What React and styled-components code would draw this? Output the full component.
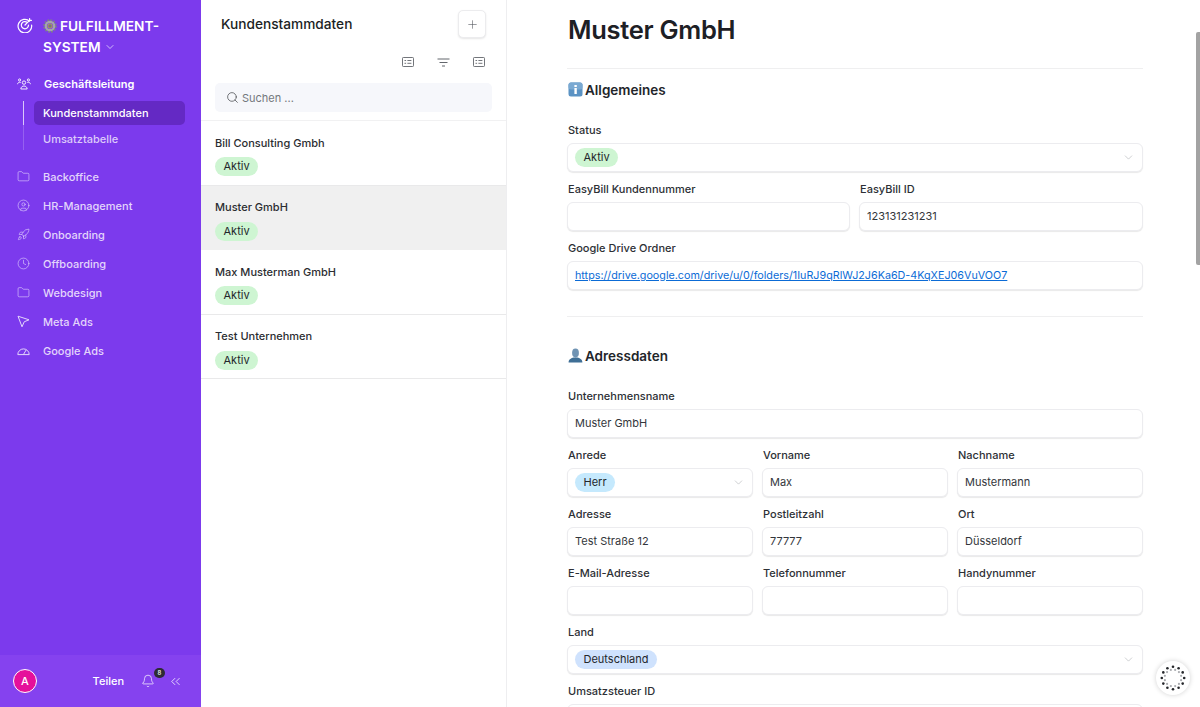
import React from "react";
import styled, { createGlobalStyle } from "styled-components";
import {
  ChevronDown,
  ChevronsLeft,
  Bell,
  Plus,
  Search,
  Folder,
  CircleUser,
  Rocket,
  Clock,
} from "lucide-react";

const GlobalStyle = createGlobalStyle`
  html, body, #root {
    margin: 0;
    height: 100%;
  }
  body {
    font-family: Inter, "Liberation Sans", sans-serif;
    color: #1f2328;
    background: #fff;
    overflow: hidden;
  }
  * { box-sizing: border-box; }
`;

const Page = styled.div`
  display: flex;
  height: 707px;
  overflow: hidden;
`;

/* sidebar */

const Sidebar = styled.aside`
  width: 201px;
  flex: none;
  display: flex;
  flex-direction: column;
  background: #7c3aed;
  color: #fff;
`;

const Brand = styled.div`
  display: flex;
  gap: 10px;
  padding: 16px 0 0 17px;
  height: 70px;
  svg.logo { margin-top: 1px; flex: none; }
`;

const BrandName = styled.div`
  font-size: 13.7px;
  font-weight: 600;
  line-height: 21px;
  width: 130px;
  svg { margin-left: 3px; vertical-align: -1px; }
  svg.gear { margin: 0 3px 0 0; vertical-align: -2px; }
`;

const Nav = styled.nav`
  flex: 1;
  display: flex;
  flex-direction: column;
`;

const NavItem = styled.div`
  display: flex;
  align-items: center;
  gap: 13px;
  height: 29px;
  padding: 0 0 2px 17px;
  font-size: 11px;
  font-weight: ${(p) => (p.$strong ? 600 : 500)};
  color: ${(p) => (p.$strong ? "#fff" : "#e3d5fb")};
  svg { flex: none; }
`;

const SubList = styled.div`
  margin: 2px 0 13px 23px;
  border-left: 1px solid rgba(255, 255, 255, 0.2);
  padding-left: 10px;
  width: 162px;
  height: 49px;
  position: relative;
`;

const SubItem = styled.div`
  height: 24px;
  margin-bottom: 2px;
  display: flex;
  align-items: center;
  padding-left: 9px;
  border-radius: 5px;
  font-size: 11px;
  font-weight: 500;
  color: ${(p) => (p.$active ? "#fff" : "#dccbfa")};
  background: ${(p) => (p.$active ? "#6429c4" : "transparent")};
  ${(p) =>
    p.$active &&
    `&::before {
      content: "";
      position: absolute;
      left: -1px;
      top: 0;
      width: 1px;
      height: 24px;
      background: rgba(255, 255, 255, 0.65);
    }`}
`;

const SidebarFooter = styled.div`
  height: 52px;
  flex: none;
  display: flex;
  align-items: center;
  padding: 0 18px 0 13px;
  background: #8542ef;
  font-size: 11px;
  font-weight: 500;
`;

const Avatar = styled.div`
  width: 24px;
  height: 24px;
  border-radius: 50%;
  border: 1px solid #fff;
  background: #e5109b;
  display: flex;
  align-items: center;
  justify-content: center;
  font-size: 11px;
  font-weight: 500;
`;

const Share = styled.span`
  margin-left: auto;
  margin-right: 17px;
`;

const BellWrap = styled.div`
  position: relative;
  display: flex;
  margin-right: 13px;
`;

const BellBadge = styled.span`
  position: absolute;
  top: -6px;
  right: -10px;
  width: 11px;
  height: 10px;
  border-radius: 5px;
  background: #2c2c34;
  font-size: 6px;
  line-height: 10px;
  text-align: center;
`;

/* list pane */

const ListPane = styled.section`
  width: 306px;
  flex: none;
  border-right: 1px solid #eeeef0;
  background: #fff;
`;

const ListHead = styled.div`
  display: flex;
  align-items: center;
  justify-content: space-between;
  padding: 10px 20px 0 20px;
  height: 38px;
`;

const ListTitle = styled.h2`
  margin: 0;
  font-size: 13.7px;
  font-weight: 500;
  color: #1c1f24;
`;

const AddButton = styled.button`
  width: 28px;
  height: 28px;
  padding: 0;
  display: flex;
  align-items: center;
  justify-content: center;
  background: #fff;
  border: 1px solid #ececee;
  border-radius: 5px;
  box-shadow: 0 1px 2px rgba(0, 0, 0, 0.1);
  color: #55585e;
`;

const ToolRow = styled.div`
  display: flex;
  justify-content: flex-end;
  gap: 23px;
  height: 24px;
  padding: 0 21px 0 0;
  align-items: center;
  margin-top: 12px;
  color: #63666c;
`;

const SearchBox = styled.div`
  display: flex;
  align-items: center;
  gap: 3px;
  margin: 9px 14px 0 14px;
  height: 29px;
  padding-left: 11px;
  border-radius: 5px;
  background: #f6f7fb;
  font-size: 11px;
  color: #74777d;
`;

const ListRows = styled.div`
  margin-top: 8px;
  border-top: 1px solid #f1f1f2;
`;

const ListRow = styled.div`
  height: 64.5px;
  padding: 14.5px 14px 0;
  border-bottom: 1px solid ${(p) => (p.$selected ? "#f0f0f0" : "#e9e9ea")};
  background: ${(p) => (p.$selected ? "#f0f0f0" : "#fff")};
`;

const RowName = styled.div`
  font-size: 11px;
  font-weight: 500;
  line-height: 14px;
  color: #2b2d31;
  margin-bottom: 4.5px;
`;

const Pill = styled.span`
  display: inline-flex;
  align-items: center;
  height: 19px;
  padding: 0 8.5px;
  border-radius: 10px;
  background: ${(p) => p.$bg || "#cef5d2"};
  font-size: 11px;
  line-height: 19px;
  color: #23262b;
`;

/* detail */

const Main = styled.main`
  flex: 1;
  min-width: 0;
  height: 707px;
  overflow: hidden;
  padding: 0 57px 0 60px;
`;

const Title = styled.h1`
  margin: 0;
  padding: 14px 0 0 1px;
  height: 69px;
  font-size: 25.5px;
  line-height: 32px;
  font-weight: 600;
  letter-spacing: -0.3px;
  color: #1d2025;
  border-bottom: 1px solid #efeff0;
`;

const SectionTitle = styled.h3`
  display: flex;
  align-items: center;
  gap: 2px;
  margin: 0;
  padding-left: 1px;
  height: 21px;
  font-size: 13.5px;
  font-weight: 600;
  color: #22252a;
`;

const FormSection = styled.section`
  padding-top: ${(p) => p.$top}px;
`;

const Fields = styled.div`
  display: flex;
  flex-direction: column;
  gap: 11px;
  margin-top: ${(p) => p.$top}px;
`;

const FieldRow = styled.div`
  display: grid;
  grid-template-columns: ${(p) => p.$cols};
  gap: 9px;
`;

const Field = styled.div`
  min-width: 0;
`;

const Label = styled.label`
  display: block;
  height: 19px;
  padding-left: 1px;
  font-size: 11px;
  line-height: 12px;
  font-weight: 500;
  color: #2d3035;
`;

const boxStyles = `
  width: 100%;
  height: 29px;
  background: #fff;
  border: 1px solid #ececef;
  border-radius: 6px;
  box-shadow: 0 1px 1px rgba(0, 0, 0, 0.09);
  font-family: Inter, "Liberation Sans", sans-serif;
  font-size: 11px;
  color: #33363b;
`;

const TextBox = styled.input`
  ${boxStyles}
  display: block;
  padding: 0 7px 1px;
  outline: none;
`;

const LinkBox = styled.div`
  ${boxStyles}
  display: flex;
  align-items: center;
  padding: 0 7px;
  a { color: #0b6bd6; text-decoration: underline; font-size: 10.75px; }
`;

const SelectBox = styled.div`
  ${boxStyles}
  display: flex;
  align-items: center;
  justify-content: space-between;
  padding: 0 7px;
  svg { color: #a5a7ab; }
`;

const Divider = styled.hr`
  margin: 26px 0 0;
  border: none;
  border-top: 1px solid #efeff0;
`;

const Scrollbar = styled.div`
  position: absolute;
  right: 0;
  top: 32px;
  width: 4px;
  height: 233px;
  border-radius: 2px 0 0 2px;
  background: #a3a3a3;
`;

const Spinner = styled.div`
  position: absolute;
  right: 10px;
  bottom: 12px;
  width: 34px;
  height: 34px;
  border-radius: 50%;
  background: #fff;
  box-shadow: 0 0 5px rgba(0, 0, 0, 0.18);
  display: flex;
  align-items: center;
  justify-content: center;
`;

const TargetLogo = () => (
  <svg className="logo" width="16" height="16" viewBox="0 0 16 16" fill="none" stroke="currentColor" strokeWidth="1.2" strokeLinecap="round">
    <path d="M12.6 4.2A6.8 6.8 0 1 0 14.6 8" />
    <path d="M10.2 5.4A3.6 3.6 0 1 0 11.5 8" />
    <path d="M8 8l4.6-4.6M12.6 3.4V1.6M12.6 3.4h1.8" />
  </svg>
);

const TeamIcon = () => (
  <svg width="14" height="12" viewBox="0 0 14 12" fill="none" stroke="currentColor" strokeWidth="0.9">
    <circle cx="7" cy="4.6" r="1.7" />
    <path d="M3.8 11c.3-2 1.5-3 3.2-3s2.9 1 3.2 3z" />
    <circle cx="2.6" cy="2" r="1.1" />
    <circle cx="11.4" cy="2" r="1.1" />
    <path d="M.5 6.2c.2-1.2 1-1.9 2.1-1.9.5 0 .9.1 1.2.4M13.5 6.2c-.2-1.2-1-1.9-2.1-1.9-.5 0-.9.1-1.2.4" />
  </svg>
);

const PointerIcon = () => (
  <svg width="13" height="13" viewBox="0 0 13 13" fill="none" stroke="currentColor" strokeWidth="1" strokeLinejoin="round">
    <path d="M1 1.2l11 3.6-4.8 2-2.2 5z" />
  </svg>
);

const DomeIcon = () => (
  <svg width="13" height="13" viewBox="0 0 13 13" fill="none" stroke="currentColor" strokeWidth="1" strokeLinejoin="round">
    <path d="M.8 10.6a5.7 5.7 0 1 1 11.4 0z" />
    <path d="M6.5 10.4l2.6-4.4" />
  </svg>
);

const ListIcon = () => (
  <svg width="12" height="10" viewBox="0 0 12 10" fill="none" stroke="currentColor" strokeWidth="0.9">
    <rect x="0.5" y="0.5" width="11" height="9" rx="0.8" />
    <path d="M2.5 3.5h1.6M5.4 3.5h4M2.5 6.3h1.6M5.4 6.3h4" />
  </svg>
);

const FilterIcon = () => (
  <svg width="13" height="9" viewBox="0 0 13 9" fill="none" stroke="currentColor" strokeWidth="1">
    <path d="M0.5 1h12M2.5 4.5h8M5 8h3" />
  </svg>
);

const GearEmoji = () => (
  <svg className="gear" width="14" height="14" viewBox="0 0 14 14">
    <circle cx="7" cy="7" r="5.8" fill="none" stroke="#7d8187" strokeWidth="2" strokeDasharray="1.8 1.2" />
    <circle cx="7" cy="7" r="4.2" fill="none" stroke="#a4a7ab" strokeWidth="2.2" />
    <circle cx="7" cy="7" r="2.2" fill="#74777c" stroke="#c2ae4a" strokeWidth="0.8" />
  </svg>
);

const InfoEmoji = () => (
  <svg width="15" height="15" viewBox="0 0 15 15">
    <rect x="0.5" y="0.5" width="14" height="14" rx="2.5" fill="#5b93c4" />
    <rect x="0.5" y="0.5" width="14" height="7" rx="2.5" fill="#7aa9d2" />
    <rect x="6.4" y="6" width="2.4" height="6" fill="#fff" />
    <rect x="6.4" y="3" width="2.4" height="2" fill="#fff" />
  </svg>
);

const BustEmoji = () => (
  <svg width="15" height="15" viewBox="0 0 15 15">
    <ellipse cx="7.5" cy="5" rx="3.4" ry="4.4" fill="#6f93b3" />
    <path d="M0.6 14.5c0-3.4 3-4.4 4.8-5h4.2c1.8.6 4.8 1.6 4.8 5z" fill="#3f6f96" />
  </svg>
);

const navItems = [
  { label: "Backoffice", icon: <Folder size={13} strokeWidth={1.1} /> },
  { label: "HR-Management", icon: <CircleUser size={13} strokeWidth={1.1} /> },
  { label: "Onboarding", icon: <Rocket size={13} strokeWidth={1.1} /> },
  { label: "Offboarding", icon: <Clock size={13} strokeWidth={1.1} /> },
  { label: "Webdesign", icon: <Folder size={13} strokeWidth={1.1} /> },
  { label: "Meta Ads", icon: <PointerIcon /> },
  { label: "Google Ads", icon: <DomeIcon /> },
];

const customers = ["Bill Consulting Gmbh", "Muster GmbH", "Max Musterman GmbH", "Test Unternehmen"];

const spinnerDots = Array.from({ length: 12 }, (_, i) => (i / 12) * Math.PI * 2);

const Text = ({ label, value }) => (
  <Field>
    <Label>{label}</Label>
    <TextBox readOnly defaultValue={value} />
  </Field>
);

const Select = ({ label, value, bg }) => (
  <Field>
    <Label>{label}</Label>
    <SelectBox>
      <Pill $bg={bg}>{value}</Pill>
      <ChevronDown size={13} strokeWidth={1} />
    </SelectBox>
  </Field>
);

export default function App() {
  return (
    <Page>
      <GlobalStyle />
      <Sidebar>
        <Brand>
          <TargetLogo />
          <BrandName>
            <GearEmoji />
            FULFILLMENT-SYSTEM
            <ChevronDown size={12} strokeWidth={1.3} />
          </BrandName>
        </Brand>
        <Nav>
          <NavItem $strong>
            <TeamIcon />
            Geschäftsleitung
          </NavItem>
          <SubList>
            <SubItem $active>Kundenstammdaten</SubItem>
            <SubItem>Umsatztabelle</SubItem>
          </SubList>
          {navItems.map(({ label, icon }) => (
            <NavItem key={label}>
              {icon}
              {label}
            </NavItem>
          ))}
        </Nav>
        <SidebarFooter>
          <Avatar>A</Avatar>
          <Share>Teilen</Share>
          <BellWrap>
            <Bell size={14} strokeWidth={1.2} />
            <BellBadge>8</BellBadge>
          </BellWrap>
          <ChevronsLeft size={15} strokeWidth={1.2} />
        </SidebarFooter>
      </Sidebar>

      <ListPane>
        <ListHead>
          <ListTitle>Kundenstammdaten</ListTitle>
          <AddButton>
            <Plus size={13} strokeWidth={1.1} />
          </AddButton>
        </ListHead>
        <ToolRow>
          <ListIcon />
          <FilterIcon />
          <ListIcon />
        </ToolRow>
        <SearchBox>
          <Search size={13} strokeWidth={1.3} color="#3d4045" />
          Suchen ...
        </SearchBox>
        <ListRows>
          {customers.map((name) => (
            <ListRow key={name} $selected={name === "Muster GmbH"}>
              <RowName>{name}</RowName>
              <Pill>Aktiv</Pill>
            </ListRow>
          ))}
        </ListRows>
      </ListPane>

      <Main>
        <Title>Muster GmbH</Title>
        <FormSection $top={10}>
          <SectionTitle>
            <InfoEmoji />
            Allgemeines
          </SectionTitle>
          <Fields $top={24}>
            <Select label="Status" value="Aktiv" />
            <FieldRow $cols="283px 1fr">
              <Text label="EasyBill Kundennummer" />
              <Text label="EasyBill ID" value="123131231231" />
            </FieldRow>
            <Field>
              <Label>Google Drive Ordner</Label>
              <LinkBox>
                <a href="#drive">https://drive.google.com/drive/u/0/folders/1IuRJ9qRlWJ2J6Ka6D-4KqXEJ06VuVOO7</a>
              </LinkBox>
            </Field>
          </Fields>
          <Divider />
        </FormSection>
        <FormSection $top={28}>
          <SectionTitle>
            <BustEmoji />
            Adressdaten
          </SectionTitle>
          <Fields $top={24}>
            <Text label="Unternehmensname" value="Muster GmbH" />
            <FieldRow $cols="repeat(3, 1fr)">
              <Select label="Anrede" value="Herr" bg="#c5e9fd" />
              <Text label="Vorname" value="Max" />
              <Text label="Nachname" value="Mustermann" />
            </FieldRow>
            <FieldRow $cols="repeat(3, 1fr)">
              <Text label="Adresse" value="Test Straße 12" />
              <Text label="Postleitzahl" value="77777" />
              <Text label="Ort" value="Düsseldorf" />
            </FieldRow>
            <FieldRow $cols="repeat(3, 1fr)">
              <Text label="E-Mail-Adresse" />
              <Text label="Telefonnummer" />
              <Text label="Handynummer" />
            </FieldRow>
            <Select label="Land" value="Deutschland" bg="#cfe2fd" />
            <Text label="Umsatzsteuer ID" />
          </Fields>
        </FormSection>
      </Main>

      <Scrollbar />
      <Spinner>
        <svg width="26" height="26" viewBox="0 0 26 26">
          {spinnerDots.map((a) => (
            <React.Fragment key={a}>
              <circle cx={13 + Math.cos(a) * 11.2} cy={13 + Math.sin(a) * 11.2} r="1.3" fill="#25272b" />
              <circle cx={13 + Math.cos(a + 0.26) * 8.4} cy={13 + Math.sin(a + 0.26) * 8.4} r="1.1" fill="#a9abaf" />
            </React.Fragment>
          ))}
        </svg>
      </Spinner>
    </Page>
  );
}
